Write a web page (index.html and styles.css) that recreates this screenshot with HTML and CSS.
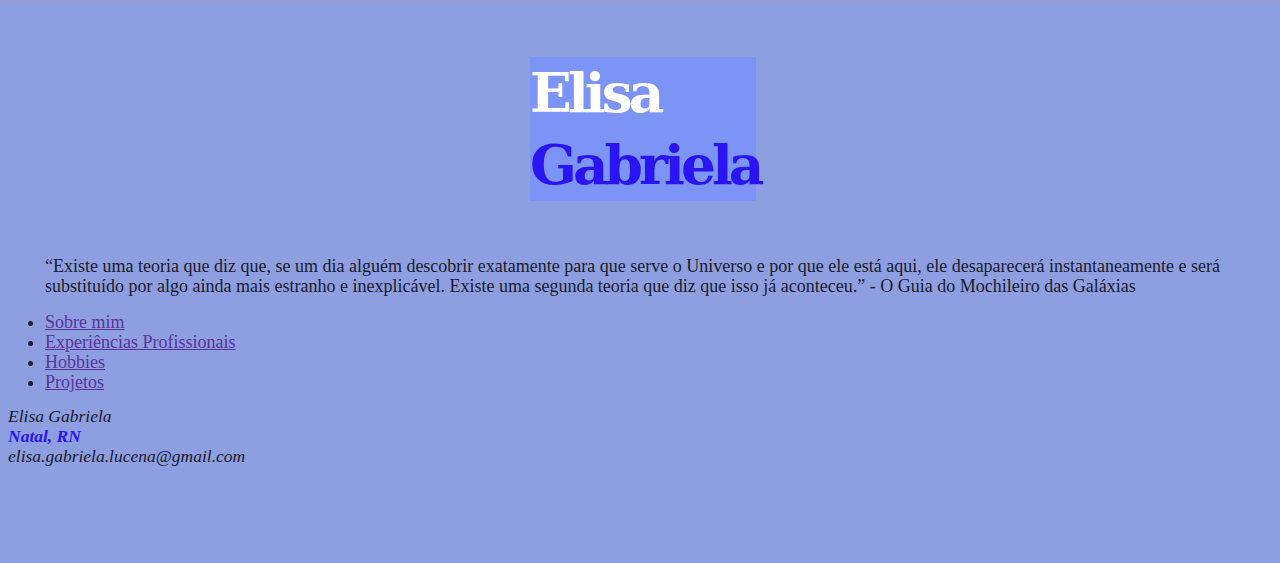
FILE: index.html
```html
<!DOCTYPE html>
<html lang="pt-BR">
<head>
<meta charset="utf-8">
<title>Elisa Gabriela</title>
<link rel="stylesheet" href="styles.css">
</head>
<body>
<header class="hero">
  <h1 class="name"><span class="first">Elisa</span><span class="last">Gabriela</span></h1>
</header>
<main>
  <blockquote class="quote">“Existe uma teoria que diz que, se um dia alguém descobrir exatamente para que serve o Universo e por que ele está aqui, ele desaparecerá instantaneamente e será substituído por algo ainda mais estranho e inexplicável. Existe uma segunda teoria que diz que isso já aconteceu.” - O Guia do Mochileiro das Galáxias</blockquote>
  <ul class="nav">
    <li><a href="#sobre">Sobre mim</a></li>
    <li><a href="#exp">Experiências Profissionais</a></li>
    <li><a href="#hobbies">Hobbies</a></li>
    <li><a href="#projetos">Projetos</a></li>
  </ul>
</main>
<footer>
  <address class="contact">Elisa Gabriela<br><strong class="city">Natal, RN</strong><br>elisa.gabriela.lucena@gmail.com</address>
</footer>
</body>
</html>
```
FILE: styles.css
```css
html {
  background: #8d9fe0;
  border-top: 1px solid #a49ac4;
}
body {
  margin: 8px;
  font-family: "Liberation Serif", "DejaVu Serif", serif;
  font-size: 18px;
  line-height: 20px;
  color: #1b1a2c;
}
.hero {
  padding-top: 48px;
  padding-left: 6px;
}
.name {
  width: 226px;
  margin: 0 auto;
  background: #7b94f6;
  font-family: "DejaVu Serif", serif;
  font-size: 55px;
  line-height: 72px;
  font-weight: bold;
  white-space: nowrap;
  letter-spacing: -4px;
}
.first {
  display: block;
  color: #ffffff;
}
.last {
  display: block;
  color: #2a14f2;
}
.quote {
  margin: 55px 40px 16px 37px;
}
.nav {
  margin: 0;
  padding-left: 37px;
}
.nav a {
  color: #5a3399;
}
.contact {
  margin-top: 14px;
  font-style: italic;
  font-size: 17.5px;
}
.city {
  color: #2a14f2;
}
```
